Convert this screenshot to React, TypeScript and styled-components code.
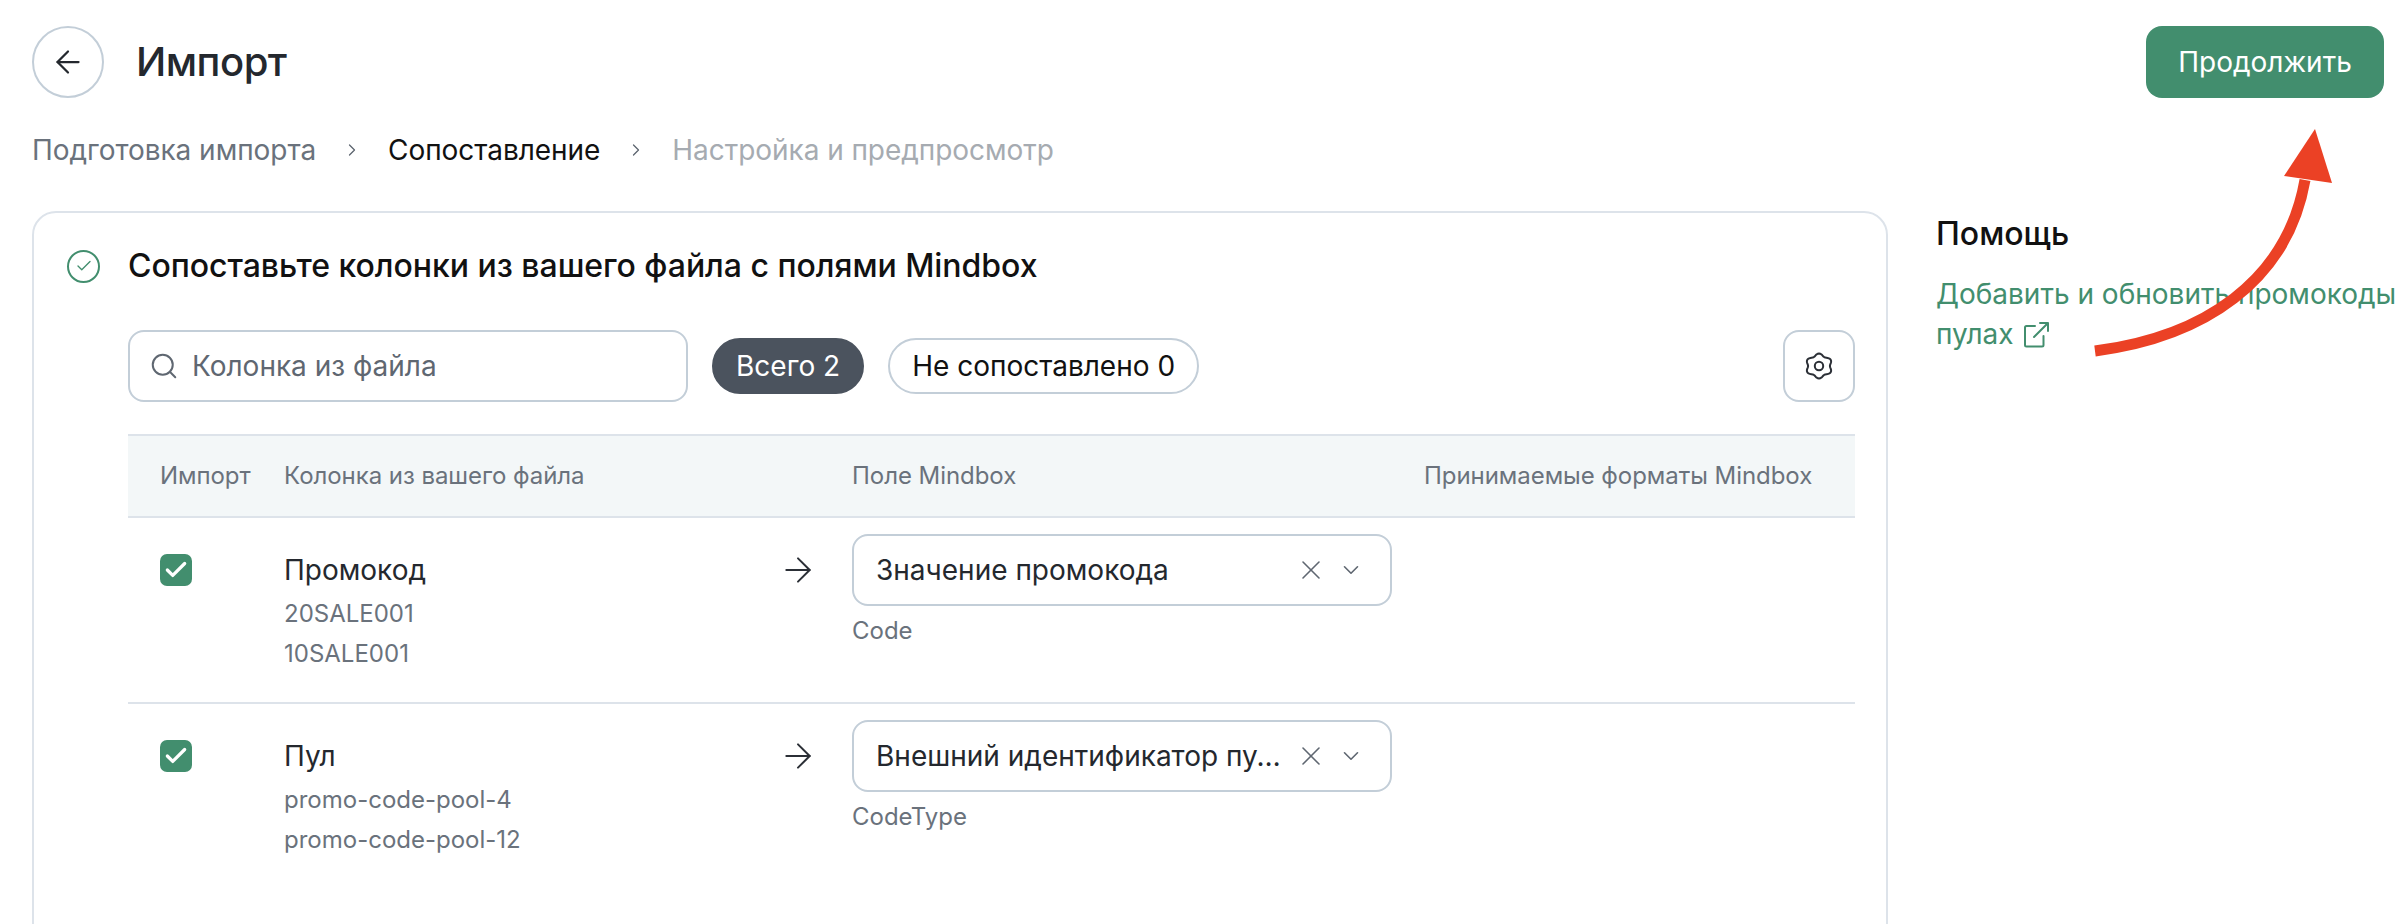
import React from 'react';
import styled, {createGlobalStyle} from "styled-components";
import {ArrowLeft, ArrowRight, Check, ChevronDown, ChevronRight, Search, X} from "lucide-react";

const GlobalStyle = createGlobalStyle`
  html, body {
    margin: 0;
    padding: 0;
    width: 2396px;
    height: 924px;
    overflow: hidden;
    background: #fff;
  }
  * {
    box-sizing: border-box;
  }
`

type MappingRow = {
    name: string;
    samples: string[];
    field: string;
    code: string;
}

const rows: MappingRow[] = [
    {name: "Промокод", samples: ["20SALE001", "10SALE001"], field: "Значение промокода", code: "Code"},
    {name: "Пул", samples: ["promo-code-pool-4", "promo-code-pool-12"], field: "Внешний идентификатор пула", code: "CodeType"},
];

// six soft lobes, top and bottom ones on the vertical axis
const gearOutline = Array.from({length: 72}, (_, i) => {
    const angle = (i / 72) * Math.PI * 2;
    const radius = 11.3 + 1.2 * Math.cos(6 * angle);
    const x = 15 + radius * Math.sin(angle) * 1.08;
    const y = 15 - radius * Math.cos(angle);
    return `${i === 0 ? "M" : "L"}${x.toFixed(2)} ${y.toFixed(2)}`;
}).join("") + "Z";

const GearIcon = () => (
    <svg width="30" height="30" viewBox="0 0 30 30" fill="none" stroke="#2b2f36" strokeWidth="2" strokeLinejoin="round">
        <path d={gearOutline}/>
        <circle cx="15" cy="15" r="4.200"/>
    </svg>
);

const ExternalIcon = () => (
    <svg width="28" height="28" viewBox="0 0 28 28" fill="none" stroke="#428e6e" strokeWidth="2" strokeLinecap="round" strokeLinejoin="round">
        <path d="M13 5H4.500A1.500 1.500 0 0 0 3 6.500V24a1.500 1.500 0 0 0 1.500 1.500H20a1.500 1.500 0 0 0 1.500-1.500V15"/>
        <path d="M12 16 26 2M18 2h8v8"/>
    </svg>
);

const CurvedArrow = () => (
    <ArrowOverlay width="2396" height="924" viewBox="0 0 2396 924">
        <path d="M2095 351C2203 337 2287 282 2305 180" fill="none" stroke="#eb4125" strokeWidth="11"/>
        <path d="M2315 129L2284 176 2332 183Z" fill="#eb4125"/>
    </ArrowOverlay>
);

export default function App() {
    return (
        <Page>
            <GlobalStyle/>
            <Header>
                <BackButton><ArrowLeft size={36} strokeWidth={1.5}/></BackButton>
                <Title>Импорт</Title>
                <PrimaryButton>Продолжить</PrimaryButton>
            </Header>
            <Steps>
                <Step>Подготовка импорта</Step>
                <ChevronRight size={20} strokeWidth={1.5} color="#5c646e"/>
                <Step active>Сопоставление</Step>
                <ChevronRight size={20} strokeWidth={1.5} color="#5c646e"/>
                <Step muted>Настройка и предпросмотр</Step>
            </Steps>
            <Main>
                <Card>
                    <CardTitleRow>
                        <StatusCircle><Check size={18} strokeWidth={1.8}/></StatusCircle>
                        <CardTitle>Сопоставьте колонки из вашего файла с полями Mindbox</CardTitle>
                    </CardTitleRow>
                    <CardBody>
                        <Toolbar>
                            <SearchBox>
                                <Search size={30} strokeWidth={1.6} color="#5f6771"/>
                                <SearchPlaceholder>Колонка из файла</SearchPlaceholder>
                            </SearchBox>
                            <Pill selected>Всего 2</Pill>
                            <Pill>Не сопоставлено 0</Pill>
                            <IconButton><GearIcon/></IconButton>
                        </Toolbar>
                        <HeadRow>
                            <HeadCell>Импорт</HeadCell>
                            <HeadCell>Колонка из вашего файла</HeadCell>
                            <span/>
                            <HeadCell>Поле Mindbox</HeadCell>
                            <HeadCell>Принимаемые форматы Mindbox</HeadCell>
                        </HeadRow>
                        {rows.map((row) => (
                            <Row key={row.name}>
                                <CheckBox><Check size={26} strokeWidth={3} color="#fff"/></CheckBox>
                                <div>
                                    <ColumnName>{row.name}</ColumnName>
                                    <Samples>
                                        {row.samples.map((sample) => <Sample key={sample}>{sample}</Sample>)}
                                    </Samples>
                                </div>
                                <ArrowCell><ArrowRight size={40} strokeWidth={1.2} color="#2b2f36"/></ArrowCell>
                                <div>
                                    <Select>
                                        <SelectValue>{row.field}</SelectValue>
                                        <X size={32} strokeWidth={1.2} color="#5f6771"/>
                                        <ChevronDown size={26} strokeWidth={1.5} color="#5f6771"/>
                                    </Select>
                                    <FieldCode>{row.code}</FieldCode>
                                </div>
                                <span/>
                            </Row>
                        ))}
                    </CardBody>
                </Card>
                <Aside>
                    <AsideTitle>Помощь</AsideTitle>
                    <HelpLink>Добавить и обновить промокоды в пулах <ExternalIcon/></HelpLink>
                </Aside>
            </Main>
            <CurvedArrow/>
        </Page>
    );
}

const Page = styled.div`
  position: relative;
  width: 2396px;
  height: 924px;
  overflow: hidden;
  padding: 26px 12px 0 32px;
  font-family: Inter, "Noto Sans", sans-serif;
  color: #24282e;
`
const ArrowOverlay = styled.svg`
  position: absolute;
  left: 0;
  top: 0;
  pointer-events: none;
`
const Header = styled.header`
  display: flex;
  align-items: center;
  height: 72px;
`
const BackButton = styled.button`
  display: flex;
  align-items: center;
  justify-content: center;
  width: 72px;
  height: 72px;
  padding: 0;
  border: 2px solid #c3ced8;
  border-radius: 50%;
  background: #fff;
  color: #24282e;
`
const Title = styled.h1`
  margin: 0 0 0 32px;
  flex: 1;
  font-size: 40px;
  line-height: 48px;
  font-weight: 500;
  letter-spacing: -0.5px;
`
const PrimaryButton = styled.button`
  width: 238px;
  height: 72px;
  border: none;
  border-radius: 16px;
  background: #428e6e;
  color: #fff;
  font-family: inherit;
  font-size: 28px;
  font-weight: 400;
`
const Steps = styled.nav`
  display: flex;
  align-items: center;
  gap: 26px;
  margin-top: 32px;
  height: 40px;
`
const Step = styled.span<{active?: boolean; muted?: boolean}>`
  font-size: 28px;
  line-height: 40px;
  letter-spacing: -0.05px;
  color: ${props => props.active ? "#111" : props.muted ? "#a6abb1" : "#6a727c"};
`
const Main = styled.main`
  display: flex;
  gap: 48px;
  margin-top: 41px;
`
const Card = styled.section`
  flex: none;
  width: 1856px;
  height: 1000px;
  padding: 0 31px 0 33px;
  border: 2px solid #dde3ea;
  border-radius: 24px;
`
const CardTitleRow = styled.div`
  display: flex;
  align-items: center;
  gap: 28px;
  height: 72px;
  margin-top: 17px;
`
const StatusCircle = styled.span`
  display: flex;
  align-items: center;
  justify-content: center;
  width: 33px;
  height: 33px;
  border: 2px solid #428e6e;
  border-radius: 50%;
  color: #428e6e;
`
const CardTitle = styled.h2`
  margin: 0;
  font-size: 32px;
  line-height: 40px;
  font-weight: 500;
  letter-spacing: -0.03px;
  color: #111;
`
const CardBody = styled.div`
  margin: 28px 0 0 61px;
`
const Toolbar = styled.div`
  display: flex;
  align-items: center;
  height: 72px;
`
const SearchBox = styled.div`
  display: flex;
  align-items: center;
  gap: 13px;
  width: 560px;
  height: 72px;
  padding-left: 19px;
  margin-right: 24px;
  border: 2px solid #c3ced8;
  border-radius: 16px;
`
const SearchPlaceholder = styled.span`
  font-size: 28px;
  color: #5f6771;
`
const Pill = styled.span<{selected?: boolean}>`
  height: 56px;
  padding: 0 22px;
  margin-right: 24px;
  border: 2px solid ${props => props.selected ? "#4b535e" : "#c3ced8"};
  border-radius: 28px;
  background: ${props => props.selected ? "#4b535e" : "#fff"};
  color: ${props => props.selected ? "#fff" : "#111"};
  font-size: 28px;
  line-height: 52px;
  white-space: nowrap;
`
const IconButton = styled.button`
  display: flex;
  align-items: center;
  justify-content: center;
  width: 72px;
  height: 72px;
  margin-left: auto;
  padding: 0;
  border: 2px solid #c3ced8;
  border-radius: 16px;
  background: #fff;
`
const HeadRow = styled.div`
  display: grid;
  grid-template-columns: 124px 494px 74px 572px 1fr;
  align-items: center;
  height: 84px;
  margin-top: 32px;
  padding-left: 32px;
  border-top: 2px solid #dde3ea;
  border-bottom: 2px solid #dde3ea;
  background: #f3f7f8;
`
const HeadCell = styled.span`
  font-size: 24px;
  line-height: 32px;
  letter-spacing: -0.05px;
  color: #6a727c;
  white-space: nowrap;
`
const Row = styled.div`
  display: grid;
  grid-template-columns: 124px 494px 74px 572px 1fr;
  align-items: start;
  height: 186px;
  padding: 16px 0 0 32px;
  &:not(:last-child) {
    border-bottom: 2px solid #dde3ea;
  }
`
const CheckBox = styled.span`
  display: flex;
  align-items: center;
  justify-content: center;
  width: 32px;
  height: 32px;
  margin-top: 20px;
  border-radius: 7px;
  background: #428e6e;
`
const ColumnName = styled.div`
  margin-top: 16px;
  font-size: 28px;
  line-height: 40px;
`
const Samples = styled.div`
  margin-top: 4px;
`
const Sample = styled.div`
  font-size: 24px;
  line-height: 40px;
  color: #6a727c;
`
const ArrowCell = styled.div`
  display: flex;
  height: 72px;
  align-items: center;
`
const Select = styled.div`
  display: flex;
  align-items: center;
  gap: 11px;
  width: 540px;
  height: 72px;
  padding: 0 26px 0 22px;
  border: 2px solid #c3ced8;
  border-radius: 16px;
`
const SelectValue = styled.span`
  flex: 1;
  min-width: 0;
  overflow: hidden;
  text-overflow: ellipsis;
  white-space: nowrap;
  font-size: 28px;
`
const FieldCode = styled.div`
  margin-top: 7px;
  font-size: 24px;
  line-height: 36px;
  color: #6a727c;
`
const Aside = styled.aside`
  flex: none;
  width: 500px;
`
const AsideTitle = styled.h3`
  margin: 0;
  padding-top: 3px;
  font-size: 32px;
  line-height: 40px;
  font-weight: 500;
  color: #111;
`
const HelpLink = styled.a`
  display: block;
  margin-top: 20px;
  font-size: 28px;
  line-height: 40px;
  color: #428e6e;
  & svg {
    vertical-align: -5px;
  }
`
